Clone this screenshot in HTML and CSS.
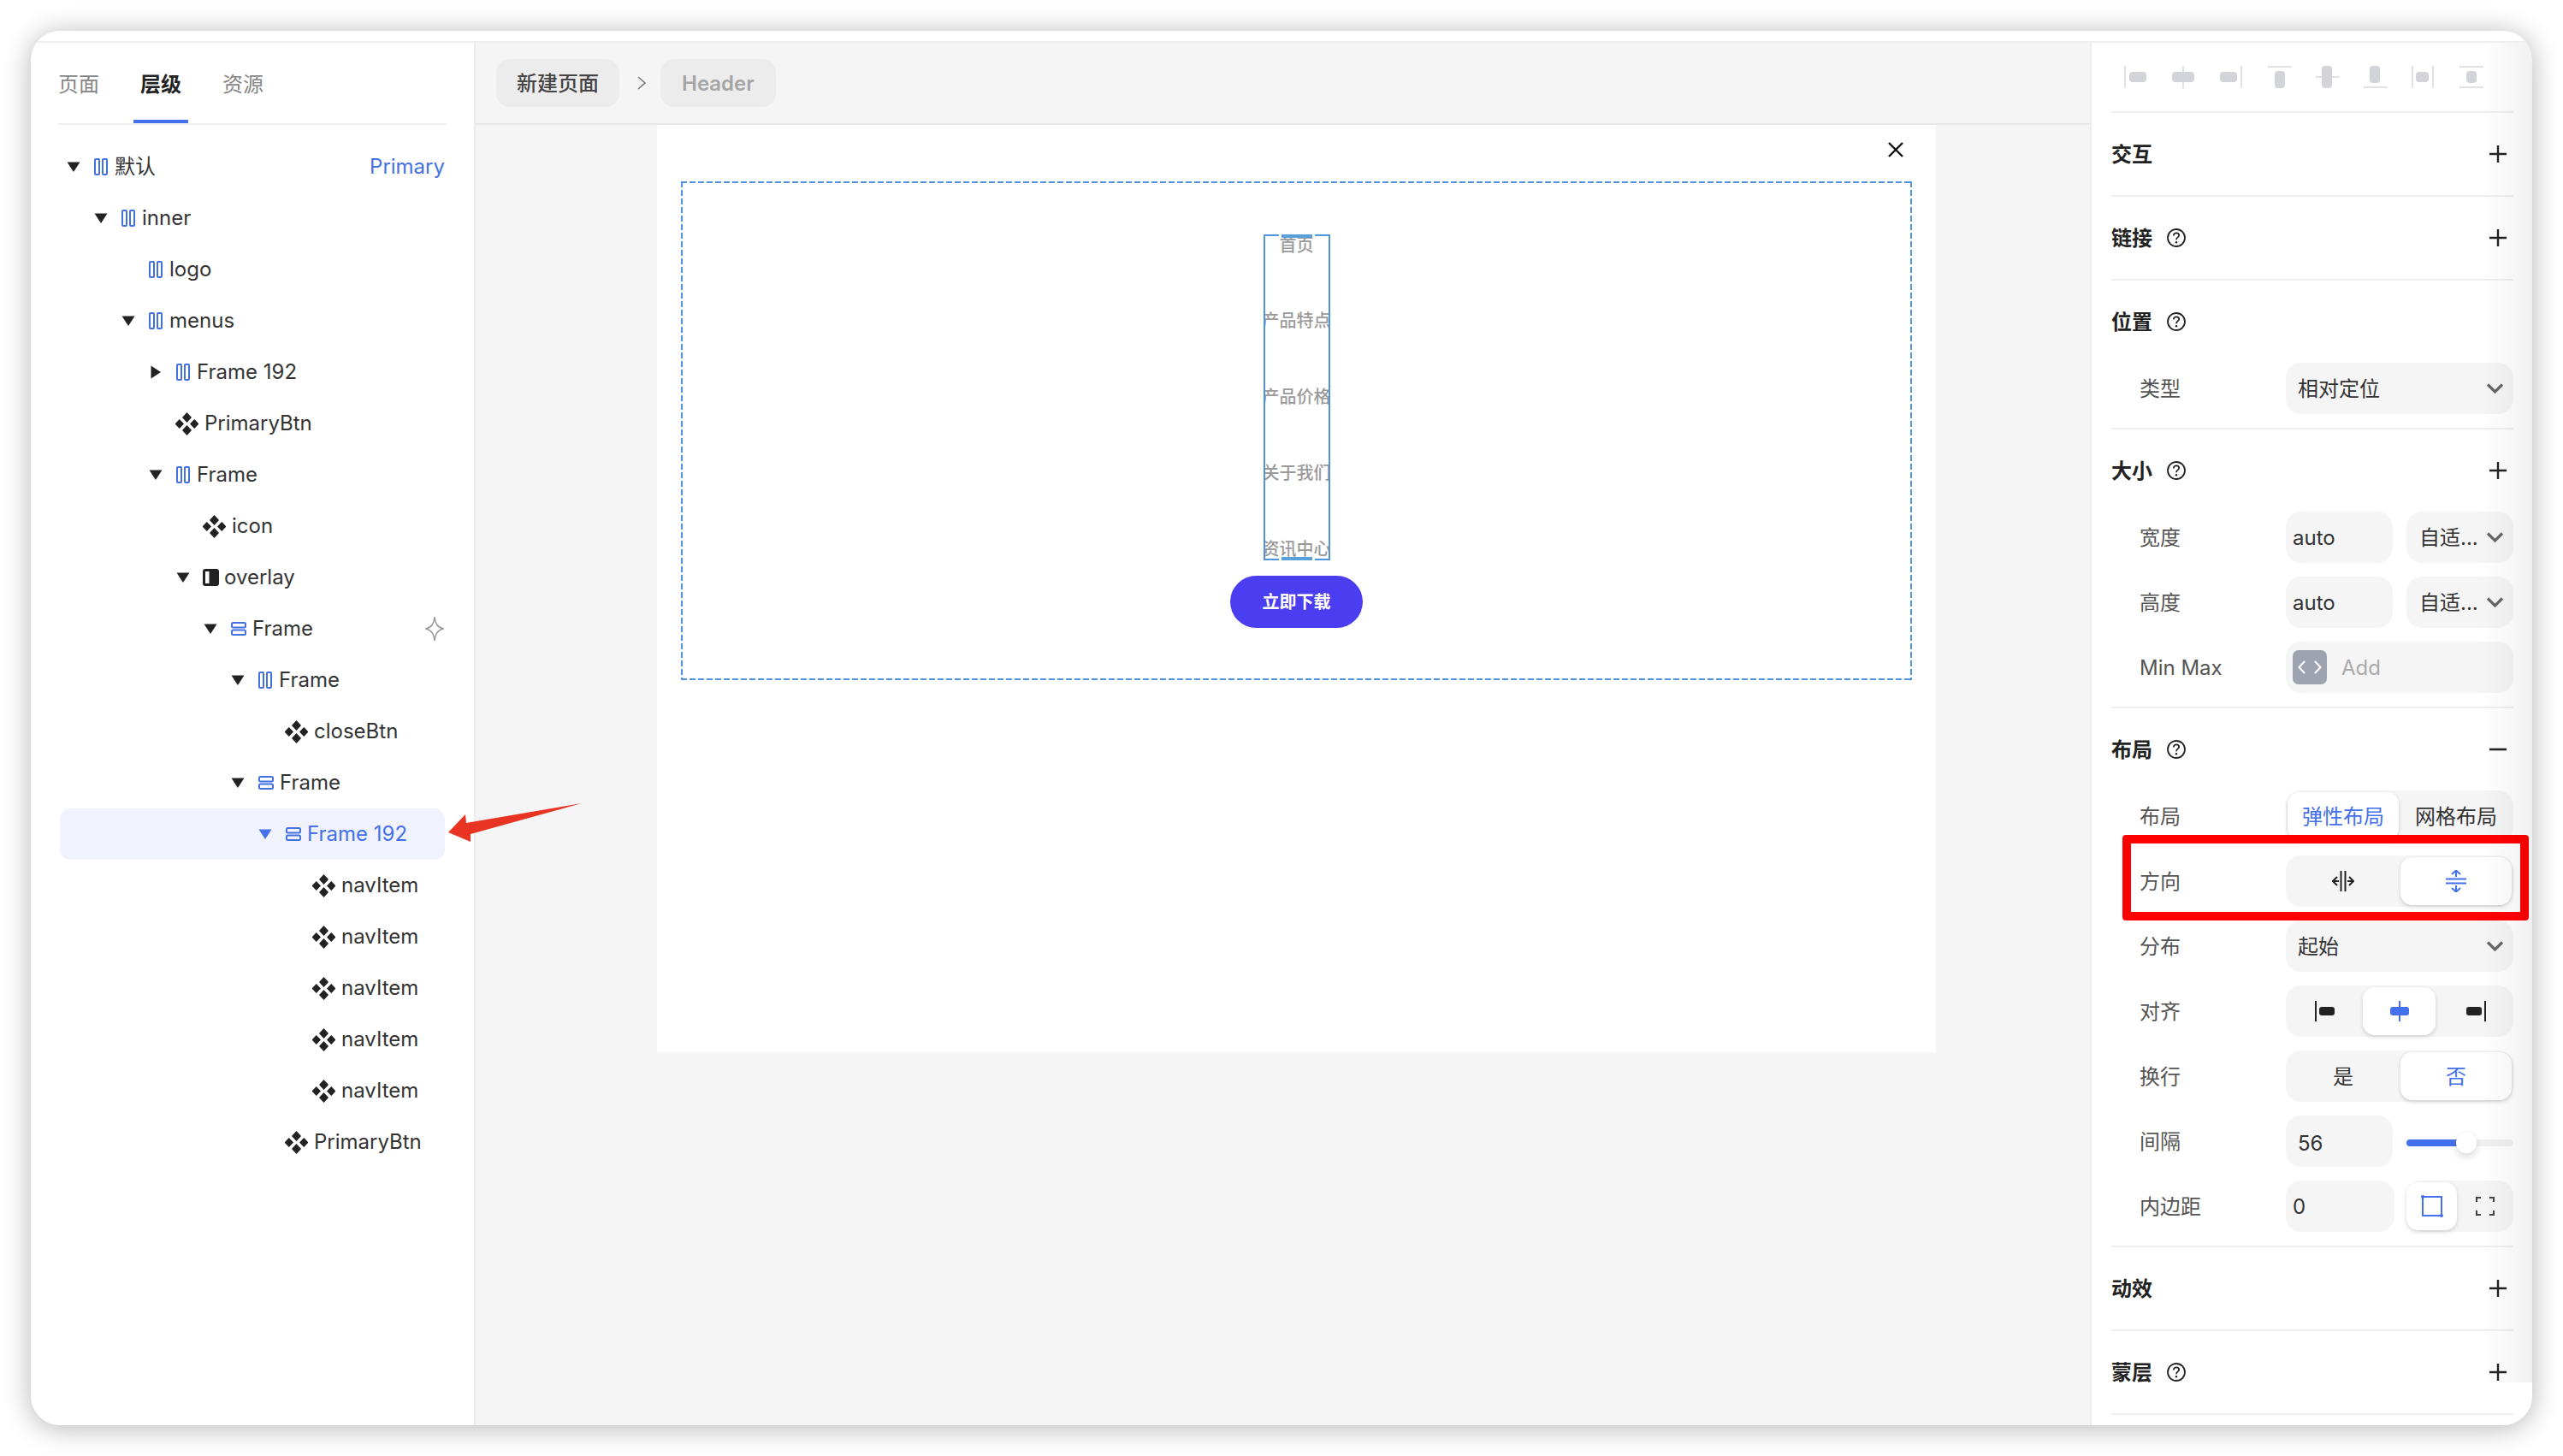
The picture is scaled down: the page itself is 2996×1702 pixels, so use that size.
FILE: index.html
```html
<!DOCTYPE html>
<html lang="zh-CN">
<head>
<meta charset="utf-8">
<title>Editor</title>
<link rel="stylesheet" href="styles.css">
</head>
<body>
<svg class="defs" xmlns="http://www.w3.org/2000/svg">
  <symbol id="down" viewBox="0 0 16 12"><path d="M0.5 0.5H15.5L8 12Z"/></symbol>
  <symbol id="right" viewBox="0 0 12 16"><path d="M0.5 0.5V15.5L12 8Z"/></symbol>
  <symbol id="cols" viewBox="0 0 16 20"><rect x="1" y="1" width="5" height="18" rx="1"/><rect x="10" y="1" width="5" height="18" rx="1"/></symbol>
  <symbol id="rows" viewBox="0 0 18 16"><rect x="1" y="1" width="16" height="5.5" rx="1.5"/><rect x="1" y="9.5" width="16" height="5.5" rx="1.5"/></symbol>
  <symbol id="comp" viewBox="0 0 27 27"><path d="M13.5 0L19 6L13.5 12L8 6Z M4.8 8L10 13.5L4.8 19L-0.4 13.5Z M22.2 8L27.4 13.5L22.2 19L17 13.5Z M13.5 15L19 21L13.5 27L8 21Z"/></symbol>
  <symbol id="help" viewBox="0 0 22 24"><circle cx="11" cy="12" r="10" fill="none" stroke="#222" stroke-width="1.8"/><path d="M7.8 9.4C7.8 7.4 9.3 6.4 11 6.4C12.8 6.4 14.2 7.5 14.2 9.1C14.2 11.4 11 11.4 11 14.2" fill="none" stroke="#222" stroke-width="1.8"/><circle cx="11" cy="17.3" r="1.2" fill="#222"/></symbol>
  <symbol id="plus" viewBox="0 0 20 20"><path d="M0 10H20M10 0V20" fill="none" stroke="#222" stroke-width="2.4"/></symbol>
  <symbol id="chev" viewBox="0 0 21 14"><path d="M2 2.5L10.5 11L19 2.5" fill="none" stroke="#666" stroke-width="3.2"/></symbol>
</svg>

<div class="window">
  <div class="topstrip"></div>
  <div class="body">
    <aside class="left">
      <nav class="tabs">
        <span class="tab">页面</span>
        <span class="tab tab-on">层级</span>
        <span class="tab">资源</span>
      </nav>
      <ul class="tree">
        <li class="row l0"><svg class="tri"><use href="#down"/></svg><svg class="ic-cols"><use href="#cols"/></svg><span class="name">默认</span><span class="tag">Primary</span></li>
        <li class="row l1"><svg class="tri"><use href="#down"/></svg><svg class="ic-cols"><use href="#cols"/></svg><span class="name">inner</span></li>
        <li class="row l2"><span class="tri"></span><svg class="ic-cols"><use href="#cols"/></svg><span class="name">logo</span></li>
        <li class="row l2"><svg class="tri"><use href="#down"/></svg><svg class="ic-cols"><use href="#cols"/></svg><span class="name">menus</span></li>
        <li class="row l3"><svg class="tri tri-r"><use href="#right"/></svg><svg class="ic-cols"><use href="#cols"/></svg><span class="name">Frame 192</span></li>
        <li class="row l3"><span class="tri"></span><svg class="ic-comp"><use href="#comp"/></svg><span class="name">PrimaryBtn</span></li>
        <li class="row l3"><svg class="tri"><use href="#down"/></svg><svg class="ic-cols"><use href="#cols"/></svg><span class="name">Frame</span></li>
        <li class="row l4"><span class="tri"></span><svg class="ic-comp"><use href="#comp"/></svg><span class="name">icon</span></li>
        <li class="row l4"><svg class="tri"><use href="#down"/></svg><svg class="ic-over" viewBox="0 0 19 20"><rect width="19" height="20" rx="3"/><rect class="over-slot" x="3" y="3" width="4.5" height="14"/></svg><span class="name name-over">overlay</span></li>
        <li class="row l5"><svg class="tri"><use href="#down"/></svg><svg class="ic-rows"><use href="#rows"/></svg><span class="name">Frame</span><svg class="star" viewBox="0 0 22 30"><path d="M11 1C12 9 14 13 21 15C14 17 12 21 11 29C10 21 8 17 1 15C8 13 10 9 11 1Z"/></svg></li>
        <li class="row l6"><svg class="tri"><use href="#down"/></svg><svg class="ic-cols"><use href="#cols"/></svg><span class="name">Frame</span></li>
        <li class="row l7"><span class="tri"></span><svg class="ic-comp"><use href="#comp"/></svg><span class="name">closeBtn</span></li>
        <li class="row l6"><svg class="tri"><use href="#down"/></svg><svg class="ic-rows"><use href="#rows"/></svg><span class="name">Frame</span></li>
        <li class="row l7 row-on"><svg class="tri"><use href="#down"/></svg><svg class="ic-rows"><use href="#rows"/></svg><span class="name">Frame 192</span></li>
        <li class="row l8"><span class="tri"></span><svg class="ic-comp"><use href="#comp"/></svg><span class="name">navItem</span></li>
        <li class="row l8"><span class="tri"></span><svg class="ic-comp"><use href="#comp"/></svg><span class="name">navItem</span></li>
        <li class="row l8"><span class="tri"></span><svg class="ic-comp"><use href="#comp"/></svg><span class="name">navItem</span></li>
        <li class="row l8"><span class="tri"></span><svg class="ic-comp"><use href="#comp"/></svg><span class="name">navItem</span></li>
        <li class="row l8"><span class="tri"></span><svg class="ic-comp"><use href="#comp"/></svg><span class="name">navItem</span></li>
        <li class="row l7"><span class="tri"></span><svg class="ic-comp"><use href="#comp"/></svg><span class="name">PrimaryBtn</span></li>
      </ul>
    </aside>

    <main class="main">
      <header class="crumbs">
        <span class="chip chip-page">新建页面</span>
        <svg class="crumb-sep" viewBox="0 0 10 16"><path d="M1 1L9 8L1 15"/></svg>
        <span class="chip chip-cur">Header</span>
      </header>
      <div class="stage">
        <div class="artboard">
          <div class="closerow">
            <svg class="close" viewBox="0 0 18 18"><path d="M1 1L17 17M17 1L1 17"/></svg>
          </div>
          <div class="dashed">
            <div class="navbox">
              <span class="handle handle-t"></span>
              <span class="nav-item">首页</span>
              <span class="nav-item">产品特点</span>
              <span class="nav-item">产品价格</span>
              <span class="nav-item">关于我们</span>
              <span class="nav-item">资讯中心</span>
              <span class="handle handle-b"></span>
            </div>
            <button class="download"><span class="download-text">立即下载</span></button>
          </div>
        </div>
      </div>
    </main>

    <aside class="right">
      <div class="aligns">
        <svg class="al" viewBox="0 0 28 26"><path class="al-l" d="M1 0V26"/><rect x="6" y="7" width="20" height="12" rx="4"/></svg>
        <svg class="al" viewBox="0 0 28 26"><path class="al-l" d="M13 0V26"/><rect x="0" y="7" width="26" height="12" rx="4"/></svg>
        <svg class="al" viewBox="0 0 28 26"><path class="al-l" d="M25 0V26"/><rect x="0" y="7" width="20" height="12" rx="4"/></svg>
        <svg class="al" viewBox="0 0 28 26"><path class="al-l" d="M0 1H28"/><rect x="8" y="6" width="12" height="20" rx="4"/></svg>
        <svg class="al" viewBox="0 0 28 26"><path class="al-l" d="M0 13H28"/><rect x="7" y="0" width="12" height="26" rx="4"/></svg>
        <svg class="al" viewBox="0 0 28 26"><path class="al-l" d="M0 25H28"/><rect x="7" y="0" width="12" height="20" rx="4"/></svg>
        <svg class="al" viewBox="0 0 28 26"><path class="al-l" d="M1 0V26M25 0V26"/><rect x="5" y="7" width="15" height="12" rx="4"/></svg>
        <svg class="al" viewBox="0 0 28 26"><path class="al-l" d="M0 1H28M0 25H28"/><rect x="8" y="6" width="12" height="14" rx="4"/></svg>
      </div>

      <section class="sec"><div class="head"><h3 class="title">交互</h3><svg class="plus"><use href="#plus"/></svg></div></section>
      <section class="sec"><div class="head"><h3 class="title">链接</h3><svg class="help"><use href="#help"/></svg><svg class="plus"><use href="#plus"/></svg></div></section>

      <section class="sec sec-rows">
        <div class="head"><h3 class="title">位置</h3><svg class="help"><use href="#help"/></svg></div>
        <div class="prop"><span class="label">类型</span><div class="field select"><span class="txt">相对定位</span><svg class="chev"><use href="#chev"/></svg></div></div>
      </section>

      <section class="sec sec-rows">
        <div class="head"><h3 class="title">大小</h3><svg class="help"><use href="#help"/></svg><svg class="plus"><use href="#plus"/></svg></div>
        <div class="prop"><span class="label">宽度</span><div class="pair"><div class="field input"><span class="txt">auto</span></div><div class="field select select-sm"><span class="txt">自适...</span><svg class="chev"><use href="#chev"/></svg></div></div></div>
        <div class="prop"><span class="label">高度</span><div class="pair"><div class="field input"><span class="txt">auto</span></div><div class="field select select-sm"><span class="txt">自适...</span><svg class="chev"><use href="#chev"/></svg></div></div></div>
        <div class="prop"><span class="label">Min Max</span><div class="field minmax"><span class="codebtn"><svg viewBox="0 0 28 16"><path d="M8 1L1.5 8L8 15M20 1L26.5 8L20 15"/></svg></span><span class="placeholder txt">Add</span></div></div>
      </section>

      <section class="sec sec-rows">
        <div class="head"><h3 class="title">布局</h3><svg class="help"><use href="#help"/></svg><svg class="minus" viewBox="0 0 20 4"><path d="M0 2H20"/></svg></div>
        <div class="prop"><span class="label">布局</span><div class="field seg seg-2"><span class="opt opt-on"><span class="txt">弹性布局</span></span><span class="opt"><span class="txt">网格布局</span></span></div></div>
        <div class="prop"><span class="label">方向</span><div class="field seg seg-2">
          <span class="opt"><svg class="dir" viewBox="0 0 26 26"><path d="M10.5 1V25M15.5 1V25M6 8L1 13L6 18M1 13H8M20 8L25 13L20 18M25 13H18"/></svg></span>
          <span class="opt opt-on"><svg class="dir dir-on" viewBox="0 0 26 26"><path d="M1 10.5H25M1 15.5H25M8 5L13 0.5L18 5M13 0.5V8M8 21L13 25.5L18 21M13 25.5V18"/></svg></span>
        </div></div>
        <div class="prop"><span class="label">分布</span><div class="field select"><span class="txt">起始</span><svg class="chev"><use href="#chev"/></svg></div></div>
        <div class="prop"><span class="label">对齐</span><div class="field seg seg-3">
          <span class="opt"><svg class="aln" viewBox="0 0 30 24"><path d="M5 0V24"/><rect x="9" y="7" width="18" height="10" rx="3"/></svg></span>
          <span class="opt opt-on"><svg class="aln aln-on" viewBox="0 0 30 24"><path d="M15 0V24"/><rect x="4" y="7" width="22" height="10" rx="3"/></svg></span>
          <span class="opt"><svg class="aln" viewBox="0 0 30 24"><path d="M25 0V24"/><rect x="3" y="7" width="18" height="10" rx="3"/></svg></span>
        </div></div>
        <div class="prop"><span class="label">换行</span><div class="field seg seg-2"><span class="opt"><span class="txt">是</span></span><span class="opt opt-on"><span class="txt">否</span></span></div></div>
        <div class="prop"><span class="label">间隔</span><div class="pair"><div class="field input input-num"><span class="txt">56</span></div><div class="slider"><span class="slider-fill"></span><span class="slider-knob"></span></div></div></div>
        <div class="prop"><span class="label">内边距</span><div class="pair pair-pad"><div class="field input"><span class="txt">0</span></div><div class="field seg seg-pad">
          <span class="opt opt-on"><svg class="padic" viewBox="0 0 26 26"><rect x="2" y="2" width="22" height="22"/><circle cx="2" cy="2" r="2"/><circle cx="24" cy="24" r="2"/></svg></span>
          <span class="opt"><svg class="padic2" viewBox="0 0 22 22"><path d="M1 6V1H6M16 1H21V6M21 16V21H16M6 21H1V16"/></svg></span>
        </div></div></div>
      </section>

      <section class="sec"><div class="head"><h3 class="title">动效</h3><svg class="plus"><use href="#plus"/></svg></div></section>
      <section class="sec"><div class="head"><h3 class="title">蒙层</h3><svg class="help"><use href="#help"/></svg><svg class="plus"><use href="#plus"/></svg></div></section>
    </aside>
  </div>

  <div class="redbox"></div>
  <svg class="redarrow" viewBox="0 0 160 48"><path d="M0 35L20 14L21 24L156 1L26 37L26 46Z"/></svg>
</div>
</body>
</html>
```

FILE: styles.css
```css
* { box-sizing: border-box; }
html, body { margin: 0; padding: 0; }
body {
  width: 2996px;
  height: 1702px;
  padding: 36px;
  background: #fff;
  overflow: hidden;
  font-family: Inter, "Noto Sans CJK SC", "Liberation Sans", sans-serif;
  font-size: 24px;
  line-height: 32px;
  color: #222;
}
.defs { display: none; }
ul { list-style: none; margin: 0; padding: 0; }
h3 { margin: 0; }

.window {
  position: relative;
  width: 2924px;
  height: 1630px;
  background: #fff;
  border-radius: 34px;
  box-shadow: 0 3px 32px rgba(0, 0, 0, .3);
  display: flex;
  flex-direction: column;
  overflow: hidden;
}
.window::after {
  content: "";
  position: absolute;
  top: 14px;
  right: 0;
  bottom: 50px;
  width: 60px;
  background: linear-gradient(90deg, rgba(0, 0, 0, 0), rgba(0, 0, 0, .055));
  pointer-events: none;
}
.topstrip { height: 14px; border-bottom: 2px solid #efeff0; flex: none; }
.body { flex: 1; display: flex; min-height: 0; }

/* left */
.left { width: 520px; flex: none; border-right: 2px solid #ececed; }
.tabs {
  position: relative;
  margin: 0 32px 0 32px;
  height: 96px;
  border-bottom: 2px solid #efeff0;
  display: flex;
  gap: 48px;
  align-items: flex-start;
  padding-top: 33px;
}
.tab { position: relative; color: #858585; line-height: 32px; height: 61px; }
.tab-on { color: #222; font-weight: 600; }
.tab-on::after {
  content: "";
  position: absolute;
  left: -8px;
  right: -8px;
  bottom: 0;
  height: 4px;
  background: #4570eb;
}
.tree { margin: 19px 34px 0 34px; }
.row {
  height: 60px;
  display: flex;
  align-items: center;
  border-radius: 12px;
  color: #333;
}
.l0 { padding-left: 8px; }
.l1 { padding-left: 40px; }
.l2 { padding-left: 72px; }
.l3 { padding-left: 104px; }
.l4 { padding-left: 136px; }
.l5 { padding-left: 168px; }
.l6 { padding-left: 200px; }
.l7 { padding-left: 232px; }
.l8 { padding-left: 264px; }
.tri { width: 16px; height: 12px; margin-right: 16px; flex: none; fill: #222; }
.tri-r { width: 12px; height: 16px; margin-right: 18px; margin-left: 2px; }
.ic-cols { width: 16px; height: 20px; flex: none; fill: none; stroke: #4570e0; stroke-width: 2; }
.ic-rows { width: 18px; height: 16px; margin-right: -1px; flex: none; fill: none; stroke: #4570e0; stroke-width: 2; }
.ic-comp { width: 27px; height: 27px; margin-left: -1px; margin-right: 7px; flex: none; fill: #222; }
.ic-over { width: 19px; height: 20px; margin-left: -1px; flex: none; fill: #222; }
.over-slot { fill: #fff; }
.name { margin-left: 8px; white-space: nowrap; }
.ic-comp + .name { margin-left: 0; }
.name-over { margin-left: 6px; }
.tag { margin-left: auto; color: #4570e0; }
.star { margin-left: auto; margin-right: 1px; width: 22px; height: 30px; fill: none; stroke: #999; stroke-width: 1.5; }
.row-on { background: #f0f3fe; color: #4570eb; }
.row-on .tri { fill: #4570eb; }

/* main */
.main { flex: 1; min-width: 0; background: #f5f5f6; display: flex; flex-direction: column; }
.crumbs {
  height: 96px;
  flex: none;
  border-bottom: 2px solid #e8e8e9;
  display: flex;
  align-items: center;
  padding-left: 24px;
}
.chip {
  height: 56px;
  border-radius: 16px;
  background: #ececed;
  display: flex;
  align-items: center;
  padding: 2px 24px 0;
}
.chip-page { color: #444; font-weight: 500; }
.chip-cur { color: #a5a5a5; font-weight: 600; padding: 2px 25px 0; }
.crumb-sep { width: 10px; height: 16px; margin: 0 17px 0 21px; fill: none; stroke: #777; stroke-width: 1.6; }
.stage { flex: 1; padding-left: 212px; }
.artboard { width: 1495px; height: 1084px; background: #fff; padding: 0 28px; }
.closerow { height: 66px; padding: 20px 10px 0 0; display: flex; justify-content: flex-end; align-items: flex-start; }
.close { width: 18px; height: 18px; fill: none; stroke: #111; stroke-width: 2.4; }
.dashed {
  width: 1439px;
  height: 583px;
  display: flex;
  flex-direction: column;
  align-items: center;
  justify-content: center;
  gap: 18px;
  background:
    linear-gradient(90deg, #4f94e0 7px, transparent 7px) 0 0 / 10px 2px repeat-x,
    linear-gradient(90deg, #4f94e0 7px, transparent 7px) 0 100% / 10px 2px repeat-x,
    linear-gradient(180deg, #4f94e0 7px, transparent 7px) 0 0 / 2px 10px repeat-y,
    linear-gradient(180deg, #4f94e0 7px, transparent 7px) 100% 0 / 2px 10px repeat-y;
}
.navbox {
  position: relative;
  width: 78px;
  height: 381px;
  display: flex;
  flex-direction: column;
  align-items: center;
  justify-content: space-between;
  overflow: hidden;
  outline: 2px solid #4f94e0;
  outline-offset: -2px;
}
.nav-item {
  width: 80px;
  flex: none;
  text-align: center;
  font-size: 20px;
  line-height: 27px;
  height: 26px;
  color: #9a9a9a;
  font-weight: 500;
  white-space: nowrap;
}
.handle {
  position: absolute;
  left: 18px;
  width: 42px;
  height: 4px;
  background: #5aa0d8;
  border-left: 3px solid #fff;
  border-right: 3px solid #fff;
}
.handle-t { top: 0; }
.handle-b { bottom: 0; }
.download {
  width: 155px;
  height: 61px;
  border: 0;
  border-radius: 31px;
  background: #4b3df0;
  color: #fff;
  font: 600 20px/26px Inter, "Noto Sans CJK SC", sans-serif;
  padding: 2px 0 0;
}
.download-text { display: block; }

/* right */
.right {
  width: 517px;
  flex: none;
  border-left: 2px solid #ececed;
  padding: 0 22px 0 23px;
}
.aligns {
  height: 82px;
  border-bottom: 2px solid #efeff0;
  padding: 27px 0 0 15px;
  display: flex;
  align-items: flex-start;
}
.al { width: 28px; height: 26px; margin-right: 28px; flex: none; fill: #d2d4d9; }
.al-l { fill: none; stroke: #e2e2e4; stroke-width: 2; }
.sec { border-bottom: 2px solid #efeff0; }
.sec-rows { padding-bottom: 16px; }
.head { height: 96px; display: flex; align-items: center; }
.title { font-size: 24px; font-weight: 600; color: #222; padding-top: 1px; }
.help { width: 22px; height: 24px; margin-left: 17px; }
.plus { width: 20px; height: 20px; margin-left: auto; margin-right: 8px; }
.minus { width: 20px; height: 4px; margin-left: auto; margin-right: 8px; fill: none; stroke: #222; stroke-width: 2.6; }
.prop { height: 60px; display: flex; align-items: center; margin-bottom: 16px; padding-left: 33px; }
.prop:last-child { margin-bottom: 0; }
.label { width: 171px; flex: none; color: #555; white-space: nowrap; padding-top: 2px; }
.txt { padding-top: 2px; white-space: nowrap; }
.field { height: 60px; border-radius: 18px; background: #f5f5f6; display: flex; align-items: center; color: #333; }
.prop > .field { width: 266px; }
.pair { width: 266px; display: flex; gap: 16px; align-items: center; }
.pair > .field { flex: none; width: 125px; }
.select { padding: 0 11px 0 14px; justify-content: space-between; }
.select-sm { padding: 0 11px 0 15px; }
.chev { width: 21px; height: 14px; flex: none; }
.input { padding-left: 8px; }
.input-num { padding: 4px 0 0 14px; }
.minmax { padding-left: 8px; }
.codebtn {
  width: 40px;
  height: 40px;
  border-radius: 7px;
  background: #9ea3b0;
  display: flex;
  align-items: center;
  justify-content: center;
  flex: none;
}
.codebtn svg { width: 28px; height: 16px; fill: none; stroke: #fff; stroke-width: 2; }
.placeholder { margin-left: 17px; color: #aaa; }
.seg { padding: 2px; }
.opt {
  height: 56px;
  border-radius: 14px;
  display: flex;
  align-items: center;
  justify-content: center;
  flex: none;
  color: #333;
  white-space: nowrap;
}
.opt-on { background: #fff; color: #4570eb; box-shadow: 0 2px 5px rgba(0, 0, 0, .16); }
.seg-2 .opt { width: 130px; }
.seg-2 .opt:first-child { margin-right: 2px; }
.seg-3 { padding: 2px 0; }
.seg-3 .opt:nth-child(1) { width: 90px; }
.seg-3 .opt:nth-child(2) { width: 85px; }
.seg-3 .opt:nth-child(3) { width: 91px; padding-left: 4px; }
.dir { width: 26px; height: 26px; fill: none; stroke: #222; stroke-width: 2; }
.dir-on { stroke: #4570eb; }
.aln { width: 30px; height: 24px; fill: #222; }
.aln path { fill: none; stroke: #222; stroke-width: 2; }
.aln-on { fill: #4570eb; }
.aln-on path { stroke: #4570eb; }
.pair-pad { gap: 14px; }
.pair-pad > .field:first-child { width: 127px; }
.pair-pad > .seg { padding: 2px 0; }
.seg-pad .opt:first-child { width: 59px; }
.seg-pad .opt:last-child { width: 66px; }
.padic { width: 26px; height: 26px; fill: none; stroke: #4570eb; stroke-width: 2; }
.padic circle { fill: #4570eb; stroke: none; }
.padic2 { width: 22px; height: 22px; fill: none; stroke: #444; stroke-width: 2; }
.slider { position: relative; flex: 1; height: 8px; border-radius: 4px; background: #f0f0f1; margin-top: 4px; }
.slider-fill { position: absolute; left: 0; top: 0; bottom: 0; width: 59px; border-radius: 4px 0 0 4px; background: #4570eb; }
.slider-knob {
  position: absolute;
  left: 58px;
  top: -8px;
  width: 24px;
  height: 24px;
  border-radius: 50%;
  background: #fff;
  box-shadow: 0 4px 10px rgba(0, 0, 0, .16);
}

/* annotations */
.redbox {
  position: absolute;
  left: 2445px;
  top: 940px;
  width: 475px;
  height: 100px;
  border: 10px solid #f00;
  border-radius: 4px;
}
.redarrow {
  position: absolute;
  left: 488px;
  top: 902px;
  width: 160px;
  height: 48px;
  fill: #e93323;
}
```
